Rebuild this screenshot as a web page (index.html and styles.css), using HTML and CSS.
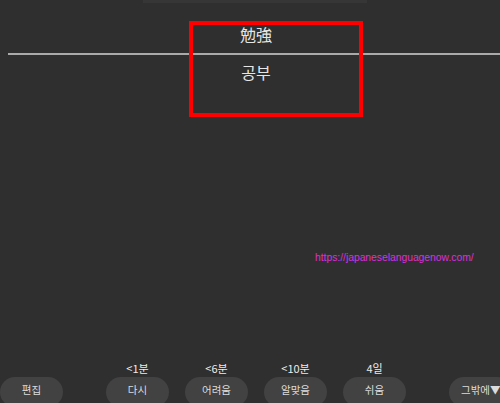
FILE: index.html
```html
<!DOCTYPE html>
<html lang="ko">
<head>
<meta charset="utf-8">
<title>Review</title>
<link rel="stylesheet" href="styles.css">
</head>
<body>
<div class="page">
  <div class="topbar"></div>
  <div class="front" lang="ja">勉強</div>
  <div class="divider"></div>
  <div class="back">공부</div>
  <div class="url">https://japaneselanguagenow.com/</div>
  <div class="answers">
    <div class="col"><button class="btn">편집</button></div>
    <div class="col gap-left">
      <div class="ease">&lt;1분</div>
      <button class="btn">다시</button>
    </div>
    <div class="col">
      <div class="ease">&lt;6분</div>
      <button class="btn">어려움</button>
    </div>
    <div class="col">
      <div class="ease">&lt;10분</div>
      <button class="btn">알맞음</button>
    </div>
    <div class="col">
      <div class="ease">4일</div>
      <button class="btn">쉬움</button>
    </div>
    <div class="col gap-left"><button class="btn more">그밖에▼</button></div>
  </div>
  <div class="highlight"></div>
</div>
</body>
</html>
```

FILE: styles.css
```css
html, body {
  margin: 0;
  padding: 0;
  background: #2f2f2f;
}

.page {
  position: relative;
  width: 500px;
  height: 403px;
  overflow: hidden;
  display: flex;
  flex-direction: column;
  font-family: "Noto Sans CJK KR", "Noto Sans CJK JP", sans-serif;
  color: #e6e6e6;
}

.topbar {
  width: 224px;
  height: 3px;
  margin-left: 143px;
  background: #363636;
  flex: none;
}

.front {
  margin-top: 21px;
  height: 20px;
  line-height: 20px;
  font-size: 16px;
  text-align: center;
  padding-left: 12px;
  font-family: "Noto Sans CJK JP", "Noto Sans CJK KR", sans-serif;
}

.divider {
  margin-top: 9px;
  margin-left: 8px;
  height: 2px;
  background: #aaaaaa;
  flex: none;
}

.back {
  margin-top: 7px;
  height: 20px;
  line-height: 20px;
  font-size: 16px;
  text-align: center;
  padding-left: 12px;
}

.url {
  margin-top: 169px;
  margin-left: 315px;
  height: 14px;
  line-height: 14px;
  font-size: 10.3px;
  font-family: "Liberation Sans", "DejaVu Sans", sans-serif;
  color: #dd30dd;
  white-space: nowrap;
}

.answers {
  margin-top: auto;
  margin-bottom: -4px;
  display: flex;
  align-items: flex-end;
  gap: 16px;
  width: 512px;
  flex: none;
}

.col {
  display: flex;
  flex-direction: column;
  align-items: center;
  width: 63px;
  flex: none;
}

.gap-left {
  margin-left: 27px;
}

.ease {
  height: 14px;
  line-height: 14px;
  margin-bottom: 2px;
  font-size: 11px;
  color: #ececec;
  white-space: nowrap;
}

.btn {
  width: 63px;
  height: 30px;
  border: none;
  border-radius: 15px;
  background: #424242;
  color: #dcdcdc;
  font-family: "Noto Sans CJK KR", sans-serif;
  font-size: 10.5px;
  line-height: 1;
  padding: 0 0 4px 0;
  white-space: nowrap;
}

.more {
  padding-left: 12px;
  text-align: left;
}

.highlight {
  position: absolute;
  left: 189px;
  top: 21px;
  width: 174px;
  height: 96px;
  box-sizing: border-box;
  border: 4px solid #ff0000;
}
```
